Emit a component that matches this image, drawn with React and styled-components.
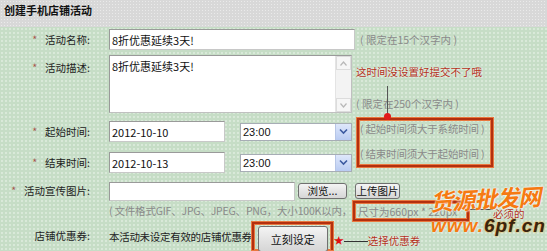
import React from "react";
import styled, { createGlobalStyle } from "styled-components";

const Global = createGlobalStyle`
    html, body {
        margin: 0;
        padding: 0;
        width: 547px;
        height: 251px;
        overflow: hidden;
    }
    body {
        font-family: "Noto Sans CJK SC", "Liberation Sans", sans-serif;
        font-size: 10.5px;
        color: #222;
    }
`;

const CN = `"Noto Sans CJK SC", "Liberation Sans", sans-serif`;
const RED = "#b3300f";

const S = {
    Page: styled.div`
        position: relative;
        width: 547px;
        height: 251px;
        overflow: hidden;
        display: flex;
        flex-flow: column;
    `,
        Header: styled.div`
            height: 27px;
            flex: 0 0 27px;
            box-sizing: border-box;
            padding: 3px 0 0 4px;
            background-color: #d8d8d8;
            background-image: radial-gradient(rgba(255,255,255,0.45) 0.7px, transparent 1px);
            background-size: 3px 3px;
        `,
            Title: styled.div`
                font-size: 11px;
                font-weight: 700;
                line-height: 14px;
                color: #111;
            `,
        Body: styled.div`
            flex: 1;
            display: flex;
            flex-flow: column;
            background-color: #c6ddc6;
            background-image: radial-gradient(rgba(255,255,255,0.35) 0.7px, transparent 1px);
            background-size: 4px 4px;
        `,
            Row: styled.div`
                display: flex;
                align-items: ${p => p.$top ? "flex-start" : "center"};
                height: ${p => p.$h}px;
                margin-top: ${p => p.$mt || 0}px;
            `,
            Label: styled.div`
                flex: 0 0 109px;
                box-sizing: border-box;
                padding-right: 19px;
                padding-top: ${p => p.$pt || 0}px;
                margin-top: ${p => p.$mt || 0}px;
                text-align: right;
                white-space: nowrap;
                line-height: 14px;
            `,
                Star: styled.span`
                    color: #a5574d;
                    margin-right: 8px;
                `,
            Input: styled.input`
                box-sizing: border-box;
                width: ${p => p.$w}px;
                height: ${p => p.$h || 21}px;
                margin: 0;
                padding: 0 2px;
                border: 1px solid #9a9a9a;
                border-right-color: #c8c8c8;
                border-bottom-color: #c8c8c8;
                background: #fff;
                font-family: ${CN};
                font-size: 11px;
                color: #111;
                outline: none;
            `,
            Hint: styled.span`
                color: #8a8a8a;
                white-space: nowrap;
                margin-left: ${p => p.$ml || 0}px;
                letter-spacing: ${p => p.$ls || 0}px;
                line-height: 14px;
            `,
            TextArea: styled.div`
                box-sizing: border-box;
                width: 243px;
                height: 58px;
                display: flex;
                border: 1px solid #9a9a9a;
                border-right-color: #c0c0c0;
                border-bottom-color: #c0c0c0;
                background: #fff;
            `,
                AreaText: styled.div`
                    flex: 1;
                    padding: 3px 2px;
                    font-size: 11px;
                    line-height: 14px;
                    color: #111;
                `,
                ScrollBar: styled.div`
                    width: 15px;
                    display: flex;
                    flex-flow: column;
                    justify-content: space-between;
                    background: #f3f3f3;
                    border-left: 1px solid #e4e4e4;
                `,
                    ScrollBtn: styled.div`
                        height: 14px;
                        display: flex;
                        align-items: center;
                        justify-content: center;
                        background: #f6f6f6;
                        border: 1px solid #dcdcdc;
                        box-sizing: border-box;
                    `,
            SideNotes: styled.div`
                display: flex;
                flex-flow: column;
                margin-left: 4px;
                height: 58px;
                padding-top: 10px;
                box-sizing: border-box;
                justify-content: space-between;
                padding-bottom: 2px;
            `,
                Note: styled.span`
                    color: #b3301a;
                    line-height: 14px;
                    white-space: nowrap;
                    text-shadow: 0 0 2px #fff;
                    margin-top: ${p => p.$mt || 0}px;
                `,
            TimeGrid: styled.div`
                display: grid;
                grid-template-columns: 109px 116px 127px 141px;
                grid-template-rows: 31px 31px;
                margin-top: 3px;
                align-items: center;
            `,
                Cell: styled.div`
                    display: flex;
                    align-items: center;
                `,
                Select: styled.div`
                    box-sizing: border-box;
                    width: 112px;
                    height: 18px;
                    margin-left: 15px;
                    display: flex;
                    align-items: center;
                    border: 1px solid #a7adb5;
                    background: #fff;
                    font-family: "Liberation Sans", sans-serif;
                    font-size: 11px;
                    color: #111;
                `,
                    SelectText: styled.span`
                        flex: 1;
                        padding-left: 2px;
                    `,
                    SelectBtn: styled.div`
                        width: 15px;
                        height: 16px;
                        display: flex;
                        align-items: center;
                        justify-content: center;
                        background: linear-gradient(#dfe8fb, #b9cbf2);
                        border-left: 1px solid #b7c6e6;
                    `,
                RedBox: styled.div`
                    grid-column: 4;
                    grid-row: 1 / span 2;
                    align-self: start;
                    margin: 2px 0 0 5px;
                    width: 136px;
                    height: 49px;
                    box-sizing: border-box;
                    border: 2px solid ${RED};
                    box-shadow: 0 0 0 1px #e9773f, inset 0 0 0 1px #e9773f;
                    display: flex;
                    flex-flow: column;
                    justify-content: space-between;
                    padding: 2px 0 4px 1px;
                    color: #8a8a8a;
                    white-space: nowrap;
                    line-height: 14px;
                    letter-spacing: -0.2px;
                    overflow: hidden;
                `,
            Button: styled.button`
                box-sizing: border-box;
                height: ${p => p.$h || 16}px;
                width: ${p => p.$w}px;
                margin: 0 0 0 ${p => p.$ml || 0}px;
                padding: 0;
                border: 1px solid #707070;
                border-radius: 3px;
                background: linear-gradient(#f4f4f4, #e4e4e4 50%, #d6d6d6);
                font-family: ${CN};
                font-size: ${p => p.$fs || 10.5}px;
                color: #111;
                line-height: 1;
            `,
            HintRow: styled.div`
                display: flex;
                align-items: center;
                height: 20px;
                padding-left: 109px;
                white-space: nowrap;
            `,
                HintBox: styled.span`
                    box-sizing: border-box;
                    width: 116px;
                    height: 20px;
                    flex: 0 0 116px;
                    margin-left: 1px;
                    display: flex;
                    align-items: center;
                    padding-left: 3px;
                    border: 2px solid ${RED};
                    box-shadow: 0 0 0 1px #e9773f, inset 0 0 0 1px #e9773f;
                    color: #8a8a8a;
                    overflow: hidden;
                `,
                Leader: styled.span`
                    flex: 0 0 ${p => p.$w}px;
                    height: 1px;
                    background: #333;
                    margin-top: ${p => p.$mt || 0}px;
                `,
            CouponText: styled.span`
                white-space: nowrap;
                letter-spacing: -0.3px;
            `,
            CouponWrap: styled.span`
                box-sizing: border-box;
                padding: 2px 3px 0 4px;
                height: 28px;
                align-self: flex-end;
                border: 2px solid ${RED};
                border-bottom: none;
                box-shadow: 0 0 0 1px #e9773f, inset 0 0 0 1px #e9773f;
            `,
            RedStar: styled.span`
                color: #e01010;
                font-size: 10px;
                margin: 6px 0 0 1px;
            `,
    Arrow: styled.div`
        position: absolute;
        left: 387px;
        top: 86px;
        width: 1px;
        height: 31px;
        background: #555;
        &::after {
            content: "";
            position: absolute;
            left: -3px;
            bottom: -3px;
            width: 7px;
            height: 7px;
            border-radius: 50%;
            background: #e21b1b;
        }
    `,
    Watermark: styled.div`
        position: absolute;
        left: 430px;
        top: 184px;
        display: flex;
        flex-flow: column;
        align-items: flex-start;
        pointer-events: none;
    `,
        WmTop: styled.span`
            font-family: ${CN};
            font-size: 23px;
            font-weight: 700;
            font-style: italic;
            color: #f57a12;
            letter-spacing: -1px;
            line-height: 28px;
            transform: rotate(-3deg);
            text-shadow: 0 0 2px #fff, 0 0 2px #fff;
        `,
        WmBottom: styled.div`
            display: flex;
            align-items: baseline;
            margin: 3px 0 0 1px;
            font-family: "Liberation Sans", sans-serif;
            font-size: 19px;
            font-weight: 700;
            font-style: italic;
            line-height: 22px;
            letter-spacing: 1px;
        `,
            WmPart: styled.span`
                color: ${p => p.$c};
                text-shadow: 0 0 2px ${p => p.$glow};
            `,
};

const ChevronDown = () => (
    <svg width="9" height="7" viewBox="0 0 9 7">
        <path d="M1 1.5 L4.5 5 L8 1.5" stroke="#3c5aa0" strokeWidth="1.6" fill="none" />
    </svg>
);

const Tri = ({ up }) => (
    <svg width="7" height="5" viewBox="0 0 7 5">
        <path d={up ? "M0.5 4.5 L3.5 1 L6.5 4.5" : "M0.5 0.5 L3.5 4 L6.5 0.5"} stroke="#b8b8b8" strokeWidth="1.2" fill="none" />
    </svg>
);

export default function App() {
    const times = [
        { label: "起始时间:", date: "2012-10-10" },
        { label: "结束时间:", date: "2012-10-13" },
    ];

    return (
        <>
            <Global />
            <S.Page>
                <S.Header>
                    <S.Title>创建手机店铺活动</S.Title>
                </S.Header>
                <S.Body>
                    <S.Row $h={21} $mt={2}>
                        <S.Label><S.Star>*</S.Star>活动名称:</S.Label>
                        <S.Input $w={246} readOnly defaultValue="8折优惠延续3天!" />
                        <S.Hint $ml={5}>( 限定在15个汉字内 )</S.Hint>
                    </S.Row>

                    <S.Row $h={58} $mt={5} $top>
                        <S.Label $pt={6}><S.Star>*</S.Star>活动描述:</S.Label>
                        <S.TextArea>
                            <S.AreaText>8折优惠延续3天!</S.AreaText>
                            <S.ScrollBar>
                                <S.ScrollBtn><Tri up /></S.ScrollBtn>
                                <S.ScrollBtn><Tri /></S.ScrollBtn>
                            </S.ScrollBar>
                        </S.TextArea>
                        <S.SideNotes>
                            <S.Note>这时间没设置好提交不了哦</S.Note>
                            <S.Hint>( 限定在250个汉字内 )</S.Hint>
                        </S.SideNotes>
                    </S.Row>

                    <S.TimeGrid>
                        {times.map(t => (
                            <React.Fragment key={t.label}>
                                <S.Label><S.Star>*</S.Star>{t.label}</S.Label>
                                <S.Cell>
                                    <S.Input $w={116} readOnly defaultValue={t.date} />
                                </S.Cell>
                                <S.Cell>
                                    <S.Select>
                                        <S.SelectText>23:00</S.SelectText>
                                        <S.SelectBtn><ChevronDown /></S.SelectBtn>
                                    </S.Select>
                                </S.Cell>
                            </React.Fragment>
                        ))}
                        <S.RedBox>
                            <span>( 起始时间须大于系统时间 )</span>
                            <span>( 结束时间须大于起始时间 )</span>
                        </S.RedBox>
                    </S.TimeGrid>

                    <S.Row $h={20} $mt={3}>
                        <S.Label><S.Star>*</S.Star>活动宣传图片:</S.Label>
                        <S.Input $w={186} $h={19} readOnly defaultValue="" />
                        <S.Button $w={49} $ml={3}>浏览...</S.Button>
                        <S.Button $w={45} $ml={8}>上传图片</S.Button>
                    </S.Row>

                    <S.HintRow>
                        <S.Hint $ls={-0.2}>( 文件格式GIF、JPG、JPEG、PNG，大小100K以内，</S.Hint>
                        <S.HintBox>尺寸为660px * 220px</S.HintBox>
                        <S.Leader $w={24} $mt={-4} />
                        <S.Note $mt={6}>必须的</S.Note>
                    </S.HintRow>

                    <S.Row $h={27} $mt={2}>
                        <S.Label $mt={-2}>店铺优惠券:</S.Label>
                        <S.CouponText>本活动未设定有效的店铺优惠券</S.CouponText>
                        <S.CouponWrap>
                            <S.Button $w={70} $h={26} $fs={11}>立刻设定</S.Button>
                        </S.CouponWrap>
                        <S.RedStar>★</S.RedStar>
                        <S.Leader $w={24} $mt={9} />
                        <S.Note $mt={9}>选择优惠券</S.Note>
                    </S.Row>
                </S.Body>

                <S.Arrow />
                <S.Watermark>
                    <S.WmTop>货源批发网</S.WmTop>
                    <S.WmBottom>
                        <S.WmPart $c="#f57a12" $glow="#fff">www.</S.WmPart>
                        <S.WmPart $c="#3a2410" $glow="#f90">6pf.cn</S.WmPart>
                    </S.WmBottom>
                </S.Watermark>
            </S.Page>
        </>
    );
}
